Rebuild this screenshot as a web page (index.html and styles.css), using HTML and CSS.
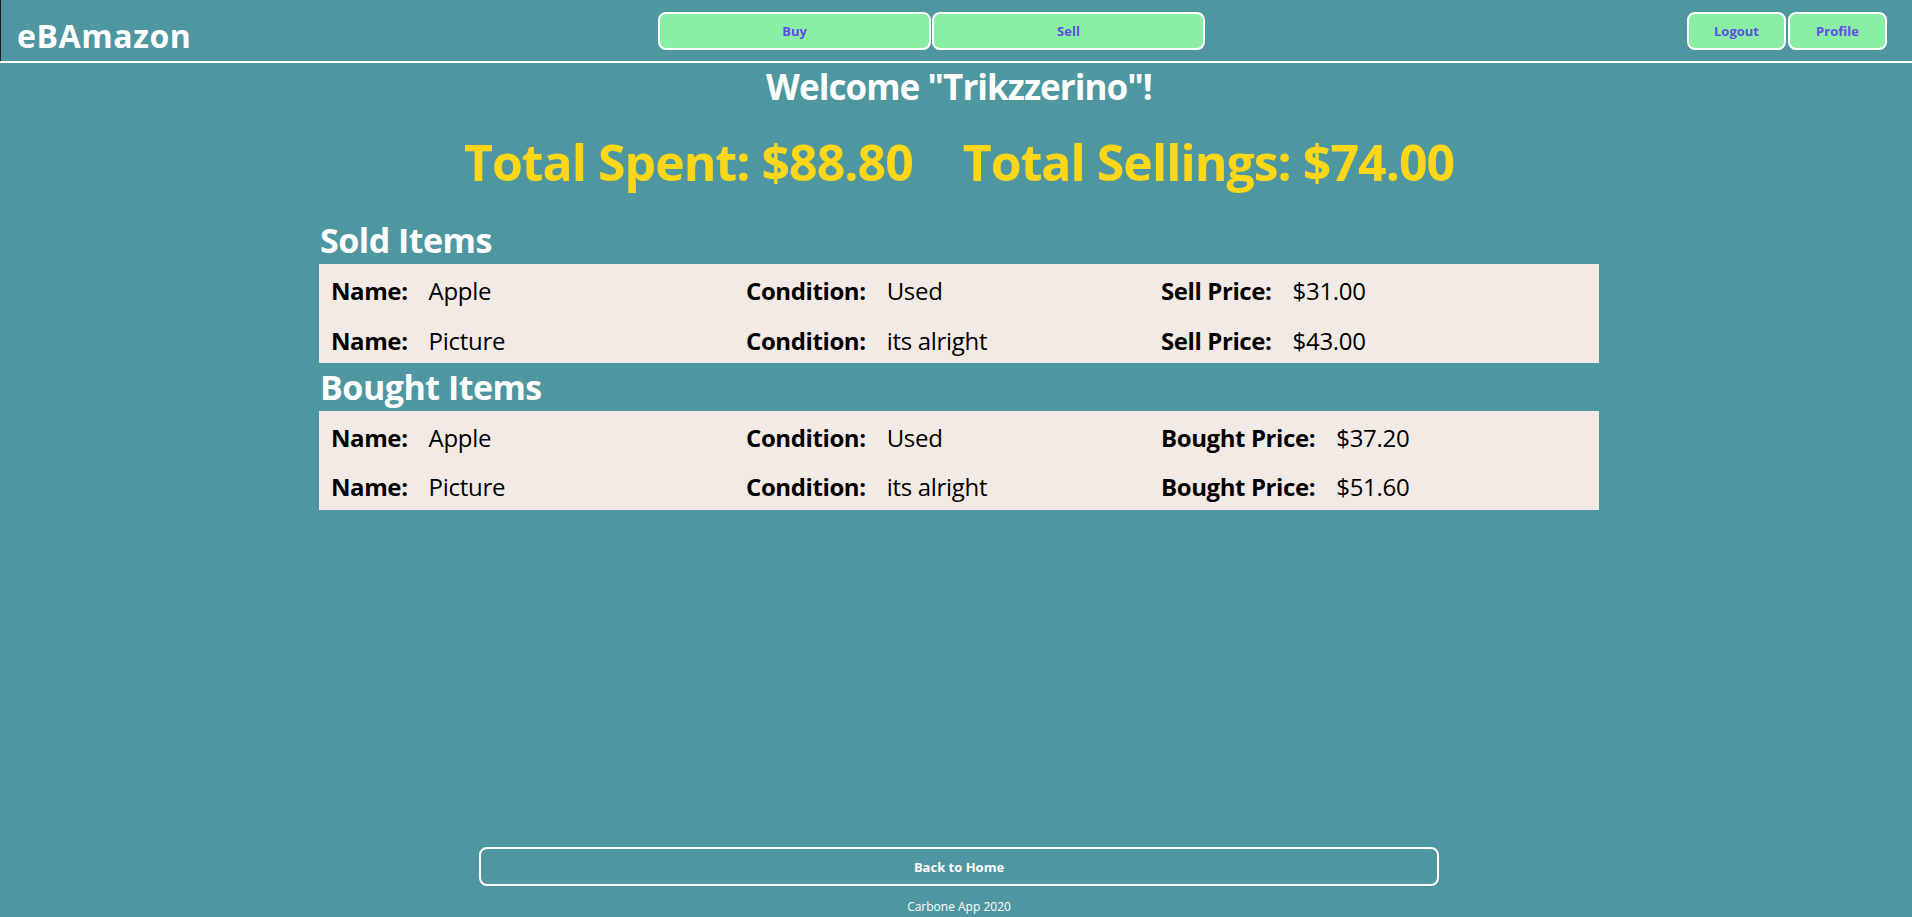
FILE: index.html
```html
<!DOCTYPE html>
<html lang="en">
<head>
<meta charset="utf-8">
<title>eBAmazon</title>
<link rel="stylesheet" href="styles.css">
</head>
<body>
<header class="topbar">
  <div class="brand">eBAmazon</div>
  <nav class="nav-main">
    <button class="nav-btn wide">Buy</button>
    <button class="nav-btn wide">Sell</button>
  </nav>
  <nav class="nav-user">
    <button class="nav-btn">Logout</button>
    <button class="nav-btn">Profile</button>
  </nav>
</header>
<main class="content">
  <h1 class="welcome">Welcome "Trikzzerino"!</h1>
  <div class="totals"><span>Total Spent: $88.80</span><span>Total Sellings: $74.00</span></div>
  <section class="items">
    <h2 class="section-title">Sold Items</h2>
    <div class="item-table">
      <div class="item-row">
        <div class="cell"><span class="label">Name:</span><span class="value">Apple</span></div>
        <div class="cell"><span class="label">Condition:</span><span class="value">Used</span></div>
        <div class="cell"><span class="label">Sell Price:</span><span class="value">$31.00</span></div>
      </div>
      <div class="item-row">
        <div class="cell"><span class="label">Name:</span><span class="value">Picture</span></div>
        <div class="cell"><span class="label">Condition:</span><span class="value">its alright</span></div>
        <div class="cell"><span class="label">Sell Price:</span><span class="value">$43.00</span></div>
      </div>
    </div>
    <h2 class="section-title second">Bought Items</h2>
    <div class="item-table">
      <div class="item-row">
        <div class="cell"><span class="label">Name:</span><span class="value">Apple</span></div>
        <div class="cell"><span class="label">Condition:</span><span class="value">Used</span></div>
        <div class="cell"><span class="label">Bought Price:</span><span class="value">$37.20</span></div>
      </div>
      <div class="item-row">
        <div class="cell"><span class="label">Name:</span><span class="value">Picture</span></div>
        <div class="cell"><span class="label">Condition:</span><span class="value">its alright</span></div>
        <div class="cell"><span class="label">Bought Price:</span><span class="value">$51.60</span></div>
      </div>
    </div>
  </section>
</main>
<footer class="page-footer">
  <button class="home-btn">Back to Home</button>
  <p class="copyright">Carbone App 2020</p>
</footer>
</body>
</html>
```

FILE: styles.css
```css
html, body {
  margin: 0;
  padding: 0;
}

body {
  background: #4f97a0;
  font-family: "Open Sans", "Noto Sans", sans-serif;
  min-height: 100vh;
  display: flex;
  flex-direction: column;
}

.topbar {
  display: grid;
  grid-template-columns: 658px 547px 1fr;
  align-items: start;
  height: 61px;
  border-bottom: 2px solid #ffffff;
  box-shadow: inset 1px 0 0 #1c1c1c;
}

.brand {
  padding-left: 17px;
  margin-top: 18px;
  font-size: 32px;
  line-height: 36px;
  font-weight: 700;
  color: #ffffff;
  letter-spacing: 0.6px;
}

.nav-main,
.nav-user {
  display: flex;
  margin-top: 12px;
}

.nav-main {
  gap: 1px;
}

.nav-user {
  justify-self: end;
  gap: 2px;
  padding-right: 25px;
}

.nav-btn {
  width: 99px;
  height: 38px;
  background: #8aeea5;
  border: 2px solid #ffffff;
  border-radius: 8px;
  color: #5b4fe2;
  font-family: "Open Sans", sans-serif;
  font-weight: 700;
  font-size: 13px;
  padding: 0;
}

.nav-btn.wide {
  width: 273px;
}

.content {
  flex: 1;
  display: flex;
  flex-direction: column;
  align-items: center;
  padding-left: 6px;
}

.welcome {
  margin: 3px 0 0;
  font-size: 35px;
  line-height: 42px;
  font-weight: 700;
  color: #ffffff;
  text-align: center;
  letter-spacing: -0.95px;
}

.totals {
  margin-top: 24px;
  display: flex;
  justify-content: center;
  gap: 50px;
  font-size: 50px;
  line-height: 60px;
  font-weight: 700;
  color: #fcd617;
  letter-spacing: -1px;
}

.items {
  width: 1280px;
  margin-top: 26px;
}

.section-title {
  margin: 0 0 1px;
  padding-left: 1px;
  font-size: 34px;
  line-height: 45px;
  font-weight: 700;
  color: #ffffff;
  letter-spacing: -0.5px;
}

.section-title.second {
  margin-top: 1.5px;
}

.item-table {
  background: #f4eae5;
}

.item-row {
  display: grid;
  grid-template-columns: repeat(3, 415px);
  padding-left: 12px;
  padding-top: 5px;
  height: 49.5px;
  box-sizing: border-box;
  font-size: 24px;
  line-height: 44.5px;
  color: #000000;
}

.cell {
  display: flex;
  gap: 21px;
}

.label {
  font-weight: 700;
  letter-spacing: -0.4px;
}

.value {
  font-weight: 400;
  letter-spacing: -0.3px;
}

.page-footer {
  display: flex;
  flex-direction: column;
  align-items: center;
  padding-left: 6px;
}

.home-btn {
  width: 960px;
  height: 39px;
  background: transparent;
  border: 2px solid #ffffff;
  border-radius: 8px;
  color: #ffffff;
  font-family: "Open Sans", sans-serif;
  font-weight: 700;
  font-size: 13px;
  padding: 0;
}

.copyright {
  margin: 11px 0 0;
  font-size: 12px;
  line-height: 20px;
  color: #ffffff;
}
```
